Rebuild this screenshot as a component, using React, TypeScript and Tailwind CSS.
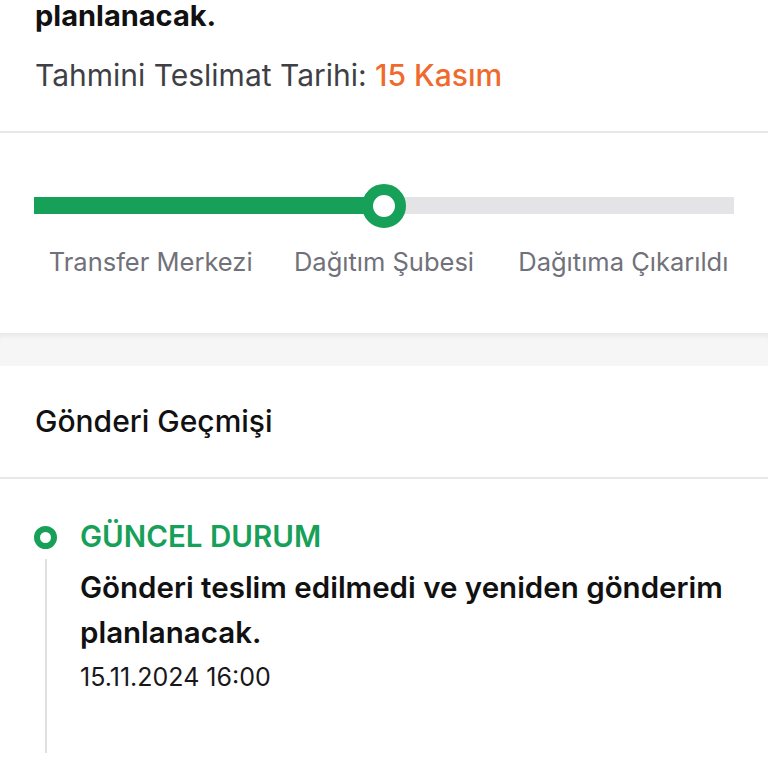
export default function App() {
  return (
    <div className="h-[768px] w-[768px] overflow-hidden bg-white font-['Inter',sans-serif]">
      {/* tahmini teslimat */}
      <div className="border-b-2 border-[#e8e8e8] px-[35px] pb-[38px]">
        <p className="text-[29px] font-bold leading-[32px] text-[#111111]">planlanacak.</p>
        <p className="mt-[25px] text-[30px] leading-[36px] text-[#3f3f46]">
          Tahmini Teslimat Tarihi: <span className="font-medium text-[#ef6a2c]">15 Kasım</span>
        </p>
      </div>

      {/* ilerleme */}
      <div className="px-[34px] pt-[64px] pb-[55px]">
        <div className="relative h-[17px] w-full bg-[#e4e4e7]">
          <div className="h-full w-1/2 bg-[#16a058]" />
          <div className="absolute left-1/2 top-1/2 h-[44px] w-[44px] -translate-x-1/2 -translate-y-1/2 rounded-full border-[11px] border-[#16a058] bg-white" />
        </div>
        <div className="mt-[32px] grid grid-cols-3 text-center text-[25.5px] leading-[32px] text-[#71717a]">
          <span>Transfer Merkezi</span>
          <span>Dağıtım Şubesi</span>
          <span className="pl-[12px]">Dağıtıma Çıkarıldı</span>
        </div>
      </div>

      <div className="h-[33px] bg-[#f6f6f6] shadow-[inset_0_6px_6px_-4px_rgba(0,0,0,0.08)]" />

      {/* gönderi geçmişi */}
      <div className="flex h-[113px] items-center border-b-2 border-[#e8e8e8] px-[35px]">
        <h2 className="text-[30px] font-medium text-[#111111]">Gönderi Geçmişi</h2>
      </div>

      <div className="flex gap-[23px] pl-[34px] pr-[20px] pt-[40px]">
        <div className="flex w-[23px] shrink-0 flex-col items-center">
          <div className="mt-[7px] h-[23px] w-[23px] rounded-full border-[6px] border-[#16a058] bg-white" />
          <div className="mt-[10px] h-[194px] w-[2px] bg-[#e0e0e0]" />
        </div>
        <div className="flex-1">
          <p className="text-[29.5px] font-semibold leading-[34px] text-[#16a058]">GÜNCEL DURUM</p>
          <p className="mt-[12px] text-[29.5px] font-semibold leading-[45px] text-[#111111]">
            Gönderi teslim edilmedi ve yeniden gönderim planlanacak.
          </p>
          <p className="mt-[6px] text-[25px] leading-[32px] text-[#18181b]">15.11.2024 16:00</p>
        </div>
      </div>
    </div>
  );
}
